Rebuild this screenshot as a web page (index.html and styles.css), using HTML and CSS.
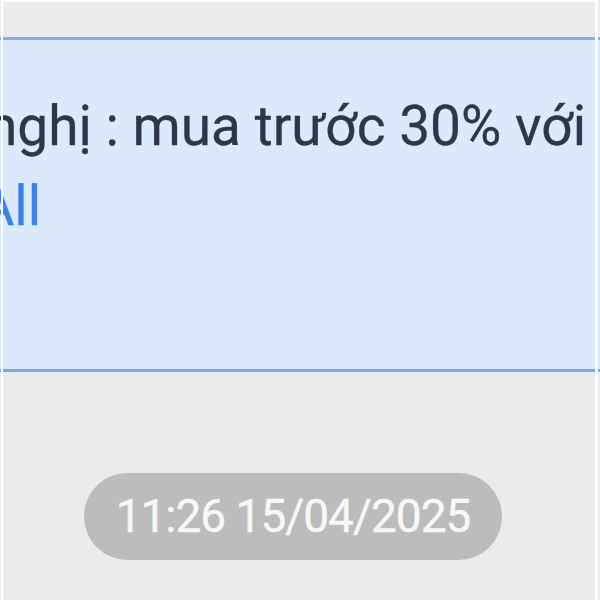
FILE: index.html
```
<!DOCTYPE html>
<html lang="vi">
<head>
<meta charset="utf-8">
<link rel="stylesheet" href="styles.css">
</head>
<body>
<div class="screen">
  <div class="bubble">
    <div class="msg">
      <p class="line">nghị : mua trước 30% với ...</p>
      <p class="line mention-line"><span class="mention">@All</span></p>
    </div>
  </div>
  <div class="time-row">
    <span class="time">11:26 15/04/2025</span>
  </div>
  <div class="frame"></div>
</div>
</body>
</html>
```
FILE: styles.css
```
html, body {
  margin: 0;
  padding: 0;
}
body {
  width: 600px;
  height: 600px;
  overflow: hidden;
  background: #ebebee;
  font-family: Roboto, "Noto Sans", sans-serif;
}
.screen {
  position: relative;
  width: 600px;
  height: 600px;
  padding-top: 37px;
  box-sizing: border-box;
  background: #ebebed;
}
.bubble {
  height: 335px;
  box-sizing: border-box;
  background: #dbeafb;
  border-top: 3px solid #8fa9ea;
  border-bottom: 3px solid #7ca6ec;
  overflow: hidden;
}
.msg {
  margin-left: -13px;
  padding-top: 46px;
}
.line {
  margin: 0;
  font-size: 55px;
  line-height: 80px;
  color: #2e3746;
  white-space: nowrap;
  -webkit-text-stroke: 0.3px #2e3746;
}
.mention-line {
  margin-left: -58px;
  -webkit-text-stroke: 0.3px #3b80ef;
}
.mention {
  color: #3b80ef;
}
.time-row {
  display: flex;
  justify-content: center;
  padding-top: 101px;
  padding-right: 14px;
}
.time {
  height: 87px;
  padding: 0 32px;
  border-radius: 44px;
  background: #bcbcbe;
  color: #f7f7f7;
  font-size: 46px;
  line-height: 87px;
  letter-spacing: -1px;
  -webkit-text-stroke: 0.4px #f7f7f7;
}
.frame {
  position: absolute;
  left: 1px;
  top: 0;
  width: 592px;
  height: 600px;
  border-top: 2px solid #ffffff;
  border-left: 2px solid #ffffff;
  border-right: 3px solid #fdfeff;
  pointer-events: none;
}
```
